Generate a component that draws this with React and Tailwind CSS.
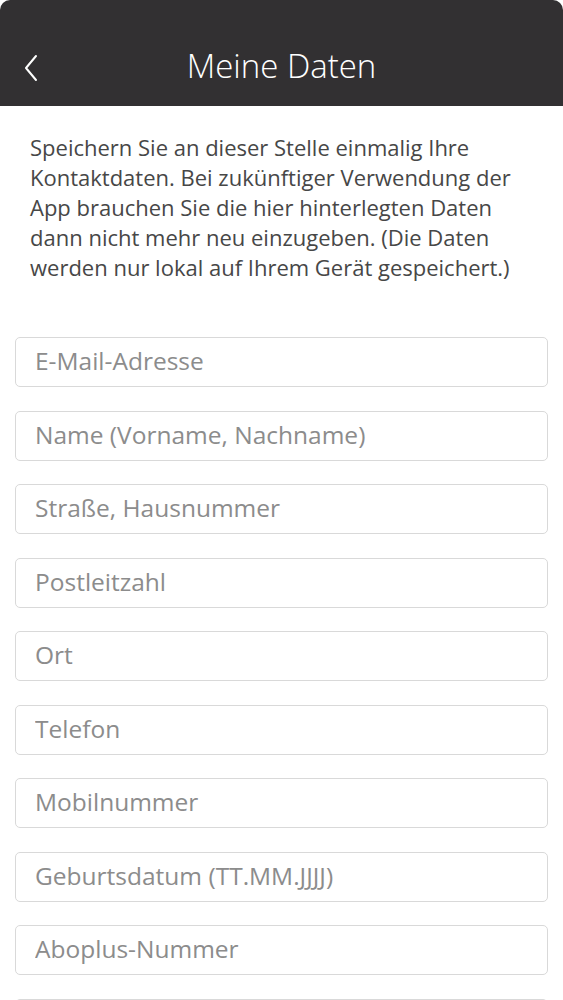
const fields = [
  "E-Mail-Adresse",
  "Name (Vorname, Nachname)",
  "Straße, Hausnummer",
  "Postleitzahl",
  "Ort",
  "Telefon",
  "Mobilnummer",
  "Geburtsdatum (TT.MM.JJJJ)",
  "Aboplus-Nummer",
  "",
];

export default function App() {
  return (
    <div className="h-[1000px] overflow-hidden bg-white font-['Open_Sans',sans-serif]">
      <header className="relative flex h-[106px] items-center justify-center rounded-t-[10px] bg-[#323032] pt-[26px]">
        <button className="absolute left-[19px] top-[50px] p-1 text-white">
          <svg width="16" height="28" viewBox="0 0 16 28" fill="none">
            <path d="M13 2 L3 14 L13 26" stroke="currentColor" strokeWidth="2" strokeLinecap="round" strokeLinejoin="round" />
          </svg>
        </button>
        <h1 className="text-[33px] font-light text-white">Meine Daten</h1>
      </header>

      <p className="pl-[30px] pr-[40px] pt-[26px] text-[22px] leading-[30px] text-[#474747]">
        Speichern Sie an dieser Stelle einmalig Ihre Kontaktdaten. Bei zukünftiger Verwendung der
        App brauchen Sie die hier hinterlegten Daten dann nicht mehr neu einzugeben. (Die Daten
        werden nur lokal auf Ihrem Gerät gespeichert.)
      </p>

      <form className="mt-[55px] flex flex-col gap-[23.5px] px-[15px]">
        {fields.map((f, i) => (
          <input
            key={i}
            type="text"
            placeholder={f}
            className="h-[50px] w-full rounded-[5px] border border-[#d9d9d9] bg-white px-[19px] pb-[3px] text-[24.5px] text-[#333] placeholder:text-[#8c8c8c] outline-none"
          />
        ))}
      </form>
    </div>
  );
}
